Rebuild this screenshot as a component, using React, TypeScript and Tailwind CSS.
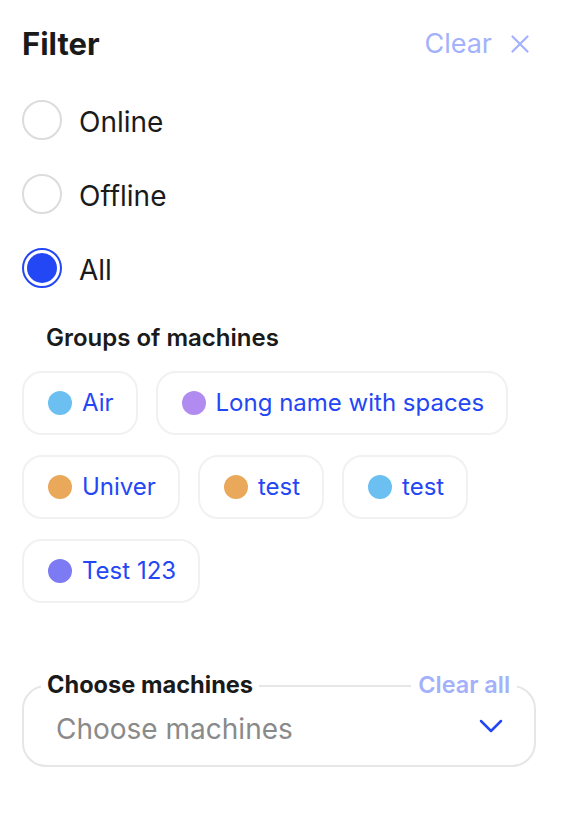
import React from "react";

const groups = [
  { name: "Air", color: "#6cbff1" },
  { name: "Long name with spaces", color: "#b28bf1" },
  { name: "Univer", color: "#e9a85a" },
  { name: "test", color: "#e9a85a" },
  { name: "test", color: "#6cbff1" },
  { name: "Test 123", color: "#7d7bf3" },
];

function Radio({ label, checked }: { label: string; checked?: boolean }) {
  return (
    <div className="flex items-center h-[40px]">
      {checked ? (
        <div className="w-[40px] h-[40px] rounded-full border-2 border-[#2447f5] flex items-center justify-center">
          <div className="w-[30px] h-[30px] rounded-full bg-[#2447f5]" />
        </div>
      ) : (
        <div className="w-[40px] h-[40px] rounded-full border-2 border-[#dcdcdc]" />
      )}
      <span className="ml-[17px] pt-[3px] text-[28px] leading-[40px] text-[#1a1a1a]">{label}</span>
    </div>
  );
}

export default function App() {
  return (
    <div
      className="w-[562px] h-[824px] bg-white pl-[22px] pr-[26px] pt-6"
      style={{ fontFamily: "Inter, 'Noto Sans', sans-serif" }}
    >
      <div className="flex items-center justify-between h-[40px]">
        <h1 className="text-[31px] leading-[40px] font-bold text-[#1a1a1a]">Filter</h1>
        <button className="flex items-center gap-[19px] text-[27px] leading-[40px] text-[#a3b1fb] pr-[7px]">
          <span>Clear</span>
          <svg width="18" height="18" viewBox="0 0 18 18" fill="none" stroke="#a3b1fb" strokeWidth="2.2" strokeLinecap="round">
            <path d="M1.5 1.5 L16.5 16.5 M16.5 1.5 L1.5 16.5" />
          </svg>
        </button>
      </div>

      <div className="mt-[36px] flex flex-col gap-[34px]">
        <Radio label="Online" />
        <Radio label="Offline" />
        <Radio label="All" checked />
      </div>

      <div className="mt-[34px] pl-[24px] text-[24px] leading-[32px] font-semibold text-[#1a1a1a]">
        Groups of machines
      </div>

      <div className="mt-[17px] flex flex-wrap gap-x-[18px] gap-y-[20px]">
        {groups.map((g, i) => (
          <div
            key={i}
            className="h-[64px] flex items-center gap-[10px] pl-[24px] pr-[22px] rounded-[20px] border-2 border-[#f1f1f1]"
          >
            <span className="w-[24px] h-[24px] rounded-full" style={{ backgroundColor: g.color }} />
            <span className="text-[24px] leading-[32px] text-[#2447f5]">{g.name}</span>
          </div>
        ))}
      </div>

      <div className="mt-[82px] relative h-[82px] rounded-[24px] border-2 border-[#e6e6e6] flex items-center justify-between pl-[32px] pr-[31px]">
        <span className="absolute left-[17px] top-[-16px] bg-white px-[6px] text-[23.6px] leading-[28px] font-bold text-[#1a1a1a]">
          Choose machines
        </span>
        <span className="absolute right-[17px] top-[-16px] bg-white px-[7px] text-[23.4px] leading-[28px] font-semibold text-[#a3b1fb]">
          Clear all
        </span>
        <span className="text-[28px] leading-[36px] text-[#8a8a8a] pt-[5px]">Choose machines</span>
        <svg width="24" height="14" viewBox="0 0 24 14" fill="none" stroke="#2447f5" strokeWidth="2.5" strokeLinecap="round" strokeLinejoin="round">
          <path d="M2 2 L12 12 L22 2" />
        </svg>
      </div>
    </div>
  );
}
